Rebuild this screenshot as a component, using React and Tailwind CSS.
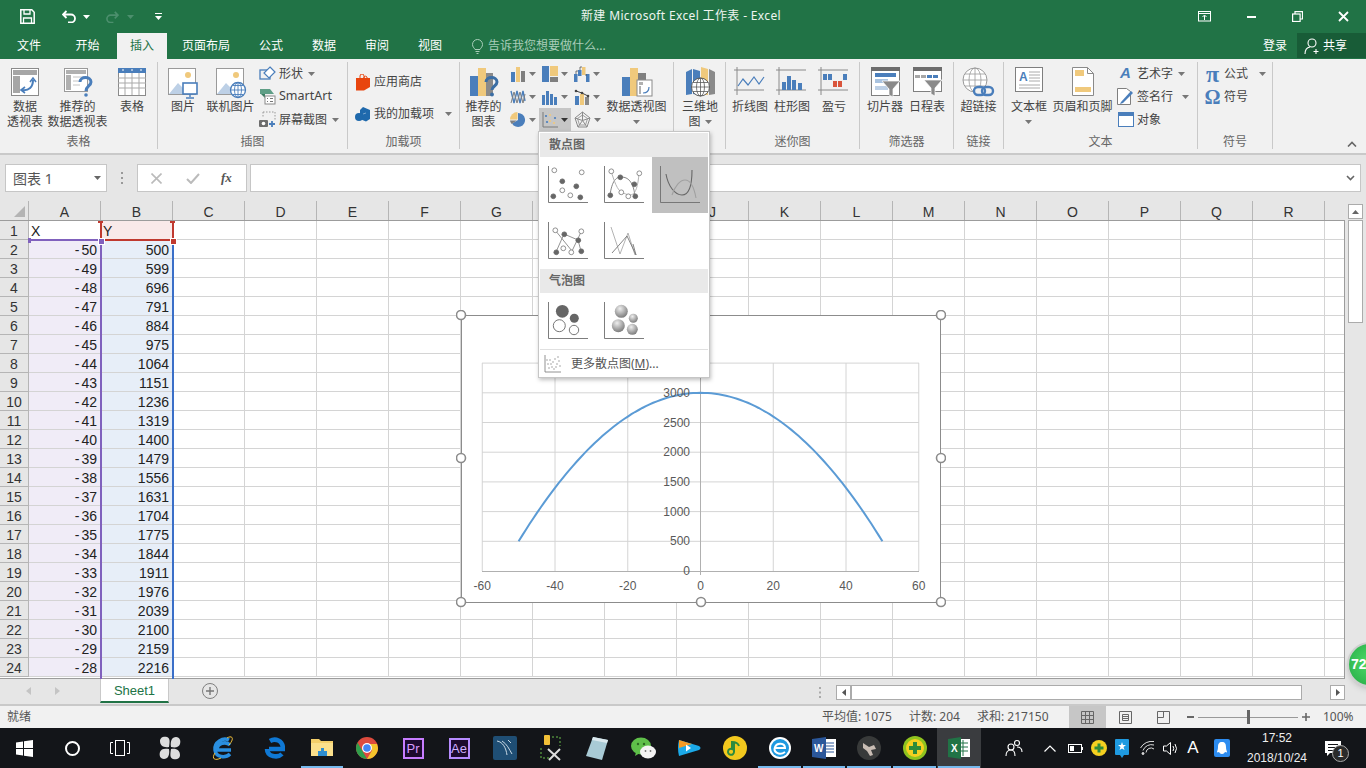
import React from "react";

const B = "#4a7ebb", O = "#f0c97c", G = "#7f7f7f";

const Caret = ({ c = "#777", className = "" }) => (
  <svg width="7" height="4" viewBox="0 0 7 4" className={className}><path d="M0 0h7L3.5 4z" fill={c} /></svg>
);

const Ic = ({ w = 30, h = 30, vb, children, className = "" }) => (
  <svg width={w} height={h} viewBox={vb || `0 0 ${w} ${h}`} className={className} fill="none">{children}</svg>
);

const Pivot = () => (
  <Ic w={30} h={30}>
    <rect x="1.5" y="1.5" width="27" height="27" fill="#fff" stroke="#8a8a8a" />
    <rect x="3" y="3" width="24" height="5" fill="#a6a6a6" /><rect x="3" y="9" width="7" height="17" fill="#a6a6a6" />
    <path d="M12 23c7 1 11-3 11-10" stroke={B} strokeWidth="2" />
    <path d="M20 15l3-4 3 4M15 20l-4 3 4 3" stroke={B} strokeWidth="1.6" />
  </Ic>
);
const RecPivot = () => (
  <Ic w={30} h={30}>
    <rect x="1.5" y="1.5" width="23" height="23" fill="#fff" stroke="#9a9a9a" />
    <rect x="3" y="3" width="20" height="4" fill="#b0b0b0" /><rect x="3" y="8" width="5" height="15" fill="#b0b0b0" />
    <path d="M10 10h12M10 14h8M10 18h7" stroke="#c4c4c4" />
    <path d="M17 15c0-6 11-6 11 0 0 4-5 4-5 9" stroke={B} strokeWidth="3" />
    <circle cx="23" cy="28" r="1.8" fill={B} />
  </Ic>
);
const TableI = () => (
  <Ic w={30} h={30}>
    <rect x="1.5" y="1.5" width="27" height="27" fill="#fff" stroke="#8a8a8a" />
    <rect x="1" y="1" width="28" height="5" fill={B} />
    <path d="M5 3h2M14 3h2M23 3h2" stroke="#fff" />
    <path d="M1 11h28M1 16h28M1 21h28M8 6v22M15 6v22M22 6v22" stroke="#a9a9a9" />
  </Ic>
);
const Landscape = () => (
  <>
    <rect x="1.5" y="1.5" width="27" height="26" fill="#fff" stroke="#9a9a9a" />
    <circle cx="21" cy="8" r="3" fill={O} />
    <path d="M2 27l9-11 7 7 3-2 4 6z" fill="#bdd0e6" />
  </>
);
const PicI = () => (
  <Ic w={32} h={32}>
    <Landscape />
    <rect x="16" y="16" width="14" height="11" fill="#fff" stroke={B} strokeWidth="1.6" />
    <path d="M23 27v3M19 31h8" stroke={B} strokeWidth="1.4" />
  </Ic>
);
const OnlineI = () => (
  <Ic w={32} h={32}>
    <Landscape />
    <circle cx="23" cy="23" r="7.5" fill="#fff" stroke={B} strokeWidth="1.3" />
    <path d="M15.5 23h15M23 15.5v15M18 18.5h10M18 27.5h10" stroke={B} strokeWidth=".9" />
    <ellipse cx="23" cy="23" rx="3.5" ry="7.5" stroke={B} strokeWidth=".9" />
  </Ic>
);
const Shapes = () => (
  <Ic w={17} h={16}>
    <rect x="1" y="4" width="10" height="9" stroke={B} strokeWidth="1.3" />
    <path d="M11 1l5 5-6 6-5-5z" fill="#fff" stroke={B} strokeWidth="1.2" />
  </Ic>
);
const SmartArtI = () => (
  <Ic w={17} h={17}>
    <path d="M1 1h10l4 5H1z" fill="#5f9e86" /><path d="M2 6l4 4v-4z" fill="#3d7c63" />
    <rect x="6" y="8" width="10" height="8" fill="#fff" stroke="#8a8a8a" />
    <path d="M8 10.5h1M11 10.5h3M8 13.5h1M11 13.5h3" stroke="#777" />
  </Ic>
);
const Shot = () => (
  <Ic w={17} h={17}>
    <path d="M4 1h12v9" stroke="#999" strokeDasharray="1.5 1.5" />
    <path d="M4 1v6" stroke="#999" strokeDasharray="1.5 1.5" />
    <rect x="0" y="9" width="9" height="7" rx="1" fill="#6d6d6d" /><circle cx="4.5" cy="12.5" r="1.8" fill="#fff" />
    <path d="M13 10v6M10 13h6" stroke={B} strokeWidth="1.8" />
  </Ic>
);
const Store = () => (
  <Ic w={16} h={17}>
    <path d="M1 4h14v9l-6 3.5H1z" fill="#e8450e" />
    <path d="M5 4V2a2 2 0 014 0v3M9 4V3a2 2 0 013 0v2" stroke="#e8450e" strokeWidth="1" />
  </Ic>
);
const AddIn = () => (
  <Ic w={16} h={15}>
    <path d="M8 0l7 3v9l-4 2.5L5 12V3z" fill="#1f69ac" /><circle cx="4" cy="10" r="4" fill="#1f69ac" />
    <path d="M8 7l3-1" stroke="#fff" strokeWidth=".4" />
  </Ic>
);
const Bars = ({ data, w = 16, h = 16 }) => (
  <Ic w={w} h={h}>
    {data.map(([x, y, bw, c], i) => <rect key={i} x={x} y={y} width={bw} height={h - y} fill={c} />)}
  </Ic>
);
const RecChart = () => (
  <Ic w={30} h={30}>
    <rect x="1" y="9" width="8" height="20" fill={B} /><rect x="9" y="1" width="8" height="28" fill={O} />
    <rect x="17" y="6" width="7" height="23" fill="#8a8a8a" />
    <path d="M17 15c0-6 11-6 11 0 0 4-5 4-5 8" stroke="#3b6ea5" strokeWidth="3" />
    <circle cx="23" cy="27.500" r="1.9" fill="#3b6ea5" />
  </Ic>
);
const Hier = () => (
  <Ic w={16} h={16}>
    <rect x="0" y="0" width="7" height="16" fill={B} /><rect x="8" y="0" width="8" height="10" fill={O} /><rect x="8" y="11" width="8" height="5" fill="#7f7f7f" />
  </Ic>
);
const Water = () => (
  <Ic w={16} h={16}>
    <rect x="0" y="8" width="3.5" height="8" fill={B} /><rect x="4" y="4" width="3.5" height="6" fill={B} /><rect x="8" y="1" width="3.5" height="8" fill={O} /><rect x="12" y="8" width="3.5" height="8" fill={B} />
    <path d="M2 8V5h2M6 4V1h2M11 9h2" stroke="#444" strokeWidth=".7" />
  </Ic>
);
const LineI = () => (
  <Ic w={16} h={16}>
    <path d="M1 2l3 12 3-12 3 12 3-12 2 10" stroke={B} strokeWidth="1.4" />
    <path d="M1 14L4 3l3 11 3-11 3 11 2-9" stroke="#7f7f7f" strokeWidth="1" />
  </Ic>
);
const Combo = () => (
  <Ic w={16} h={17}>
    <rect x="1" y="8" width="4" height="9" fill={B} /><rect x="6" y="6" width="4" height="11" fill={O} /><rect x="11" y="9" width="4" height="8" fill="#8a8a8a" />
    <path d="M2 3l6 2 6 3" stroke="#444" strokeWidth="1" /><circle cx="2" cy="3" r="1.3" fill="#444" /><circle cx="8" cy="5" r="1.3" fill="#444" /><circle cx="14" cy="8" r="1.3" fill="#444" />
  </Ic>
);
const Pie = () => (
  <Ic w={16} h={16}>
    <path d="M8 1a7 7 0 11-6 10.5L8 8z" fill={B} /><path d="M7.5 0v7.5L0 7.5A7.5 7.5 0 017.5 0z" fill={O} /><path d="M0 8.5h6.8L1.6 12A7 7 0 010 8.5z" fill="#7f7f7f" />
  </Ic>
);
const ScatterS = () => (
  <Ic w={16} h={16}>
    <path d="M1 0v15h15" stroke="#7a7a7a" /><circle cx="4" cy="4" r="1.1" fill={B} /><circle cx="8" cy="9" r="1.1" fill={O} /><circle cx="8" cy="3" r="1.1" fill={O} /><circle cx="13" cy="6" r="1.1" fill={B} /><circle cx="5" cy="10" r="1.1" fill={B} /><circle cx="12" cy="11" r="1.1" fill={O} />
  </Ic>
);
const Radar = () => (
  <Ic w={17} h={17}>
    <path d="M8.5 1l7.5 6-3 9H4L1 7z" stroke="#8a8a8a" /><path d="M8.5 4l5 3.5-2 6.5H5.5l-2-6.5z" stroke="#a0a0a0" /><path d="M8.5 1v8.5M16 7L8.5 9.5M13 16L8.5 9.5M4 16l4.5-6.5M1 7l7.5 2.5" stroke="#8a8a8a" />
  </Ic>
);
const PivChart = () => (
  <Ic w={32} h={30}>
    <rect x="1" y="10" width="8" height="19" fill={B} /><rect x="9" y="1" width="8" height="28" fill={O} /><rect x="17" y="6" width="8" height="23" fill="#7f7f7f" />
    <rect x="16" y="13" width="15" height="16" fill="#fff" stroke="#8a8a8a" />
    <rect x="18" y="15" width="4" height="3" fill="#b0b0b0" /><rect x="18" y="19" width="2" height="8" fill="#b0b0b0" />
    <path d="M22 26c4 0 6-2 6-6" stroke={B} strokeWidth="1.2" />
  </Ic>
);
const Map3D = () => (
  <Ic w={31} h={30}>
    <path d="M1 5l6-3v25l-6 1z" fill={B} /><path d="M8 2l7 2v24l-7-1z" fill="#4a7ebb" /><path d="M16 0l7 2v26h-7z" fill={O} /><path d="M24 2l6 3v22l-6 1z" fill="#8a8a8a" />
    <circle cx="15.5" cy="20" r="9" fill="#fff" stroke="#5b5b5b" />
    <path d="M6.5 20h18M15.5 11v18M8 15.5h15M8 24.5h15" stroke="#5b5b5b" strokeWidth=".8" /><ellipse cx="15.5" cy="20" rx="4" ry="9" stroke="#5b5b5b" strokeWidth=".8" />
  </Ic>
);
const Spark = ({ children }) => (
  <Ic w={32} h={28}>
    <path d="M0 3h30M0 23h30M3 0v28" stroke="#8a8a8a" />{children}
  </Ic>
);
const Slicer = () => (
  <Ic w={29} h={30}>
    <rect x=".5" y=".5" width="28" height="28" fill="#fff" stroke="#7f7f7f" /><rect y="0" width="29" height="4" fill="#6d6d6d" />
    <rect x="4" y="6" width="21" height="4" fill={B} /><rect x="4" y="12" width="13" height="4" fill="#a9c3e0" /><rect x="4" y="19" width="13" height="4" fill="#bdd0e6" />
    <path d="M11 14h18l-7 8v8l-4-2v-6z" fill="#8a8a8a" stroke="#fff" strokeWidth=".7" />
  </Ic>
);
const Timeline = () => (
  <Ic w={29} h={30}>
    <rect x=".5" y=".5" width="28" height="24" fill="#fff" stroke="#7f7f7f" /><rect y="0" width="29" height="4" fill="#6d6d6d" />
    <rect x="2" y="8" width="5" height="3" fill="#a6a6a6" /><rect x="8" y="8" width="5" height="3" fill="#a6a6a6" /><rect x="14" y="8" width="5" height="3" fill={B} /><rect x="20" y="8" width="5" height="3" fill={B} />
    <path d="M11 13h18l-7 8v8l-4-2v-6z" fill="#8a8a8a" stroke="#fff" strokeWidth=".7" />
  </Ic>
);
const Globe = () => (
  <Ic w={33} h={31}>
    <circle cx="13" cy="13" r="12" fill="#fff" stroke="#9a9a9a" />
    <path d="M1 13h24M13 1v24M3 7h20M3 19h20" stroke="#9a9a9a" strokeWidth=".8" /><ellipse cx="13" cy="13" rx="6" ry="12" stroke="#9a9a9a" strokeWidth=".8" />
    <rect x="12" y="20" width="11" height="8" rx="4" stroke={B} strokeWidth="2.4" fill="#f1f1f1" /><rect x="20" y="20" width="11" height="8" rx="4" stroke={B} strokeWidth="2.4" />
  </Ic>
);
const TextBox = () => (
  <Ic w={29} h={26}>
    <rect x=".5" y=".5" width="27" height="24" fill="#fff" stroke="#7f7f7f" />
    <text x="4" y="14" fontSize="12" fontWeight="700" fill={B} fontFamily="Liberation Sans">A</text>
    <path d="M14 5h11M14 8h11M14 11h11M14 14h11M4 18h21M4 21h21" stroke="#aaa" />
  </Ic>
);
const HeaderI = () => (
  <Ic w={22} h={29}>
    <path d="M.5.5h15l6 6v22H.5z" fill="#fff" stroke="#8a8a8a" /><path d="M15.5.5v6h6" stroke="#8a8a8a" />
    <rect x="3" y="3" width="9" height="6" fill={O} /><rect x="3" y="20" width="16" height="5" fill={O} />
  </Ic>
);
const Sign = () => (
  <Ic w={17} h={17}>
    <path d="M.5.5h9l4 3v13H.5z" fill="#fff" stroke="#7f7f7f" /><path d="M4 14L14 3l2 2L6 15l-3 1z" fill={B} />
  </Ic>
);
const ObjI = () => (
  <Ic w={16} h={15}>
    <rect x=".5" y=".5" width="15" height="14" fill="#fff" stroke={B} /><rect width="16" height="4" fill={B} />
  </Ic>
);

const Big = ({ w, icon, lines, caret, top = "h-[29px]" }) => (
  <div className={`flex flex-col items-center pt-[5px] shrink-0 ${w}`}>
    <div className={`flex items-start justify-center ${top}`}>{icon}</div>
    <div className="mt-[3px] text-center leading-[15px] whitespace-nowrap">
      {lines.map((l, i) => <div key={i} className="h-[15px] flex justify-center items-center gap-[4px]">{l}{caret === i && <Caret />}</div>)}
      {caret === lines.length && <div className="h-[15px] flex justify-center items-center"><Caret /></div>}
    </div>
  </div>
);
const Small = ({ icon, label, caret, w, gap = "gap-[3px]" }) => (
  <div className={`h-[23px] flex items-center whitespace-nowrap ${gap} ${w || ""}`}>
    <div className="w-[17px] flex justify-center shrink-0">{icon}</div>
    <span>{label}</span>
    {caret && <Caret className={caret} />}
  </div>
);
const Group = ({ w, label, children }) => (
  <div className={`h-[87px] shrink-0 flex flex-col border-r border-[#c9c9c9] ${w}`}>
    <div className="h-[72px] flex">{children}</div>
    <div className="h-[15px] leading-[15px] text-center text-[#666]">{label}</div>
  </div>
);
const Cell3 = ({ icon, active }) => (
  <div className={`w-[32px] h-[23px] flex items-center justify-center gap-[3px] ${active ? "bg-[#c6c6c6]" : ""}`}>
    {icon}<Caret c={active ? "#333" : "#777"} />
  </div>
);

function Ribbon() {
  return (
    <div className="h-[94px] bg-[#f1f1f1] pt-[3px] flex text-[12px] text-[#444]">
      <Group w="w-[158px]" label="表格">
        <Big w="w-[40px] ml-[5px]" icon={<Pivot />} lines={["数据", "透视表"]} />
        <Big w="w-[65px]" icon={<RecPivot />} lines={["推荐的", "数据透视表"]} />
        <Big w="w-[44px]" icon={<TableI />} lines={["表格"]} />
      </Group>
      <Group w="w-[190px]" label="插图">
        <Big w="w-[48px] ml-[1px]" icon={<PicI />} lines={["图片"]} />
        <Big w="w-[47px]" icon={<OnlineI />} lines={["联机图片"]} />
        <div className="ml-[5px]">
          <Small icon={<Shapes />} label="形状" caret="ml-[2px]" />
          <Small icon={<SmartArtI />} label={<span className="text-[12.5px]">SmartArt</span>} />
          <Small icon={<Shot />} label="屏幕截图" caret="ml-[2px]" />
        </div>
      </Group>
      <Group w="w-[112px]" label="加载项">
        <div className="pl-[7px] pt-[4px]">
          <div className="h-[32px] flex items-center gap-[2px]"><div className="w-[17px]"><Store /></div><span>应用商店</span></div>
          <div className="h-[32px] flex items-center gap-[2px]"><div className="w-[17px]"><AddIn /></div><span>我的加载项</span><Caret className="ml-[9px]" /></div>
        </div>
      </Group>
      <Group w="w-[214px]" label="">
        <Big w="w-[47px]" icon={<RecChart />} lines={["推荐的", "图表"]} />
        <div className="grid grid-cols-3 grid-rows-3 h-[69px]">
          <Cell3 icon={<Bars data={[[1,6,4,B],[6,1,4,O],[11,5,4,"#7f7f7f"]]} />} />
          <Cell3 icon={<Hier />} />
          <Cell3 icon={<Water />} />
          <Cell3 icon={<LineI />} />
          <Cell3 icon={<Bars data={[[0,6,3,B],[4,2,3,B],[8,5,3,B],[12,8,3,B]]} />} />
          <Cell3 icon={<Combo />} />
          <Cell3 icon={<Pie />} />
          <Cell3 icon={<ScatterS />} active />
          <Cell3 icon={<Radar />} />
        </div>
        <Big w="w-[65px] ml-[1px]" icon={<PivChart />} lines={["数据透视图"]} caret={1} />
      </Group>
      <Group w="w-[52px]" label="">
        <Big w="w-[52px]" icon={<Map3D />} lines={["三维地", "图"]} caret={1} />
      </Group>
      <Group w="w-[134px]" label="迷你图">
        <Big w="w-[42px] ml-[3px]" icon={<Spark><path d="M4 19l5-7 5 6 6-8 5 7 5-7" stroke={B} strokeWidth="1.2" /></Spark>} lines={["折线图"]} />
        <Big w="w-[42px]" icon={<Spark><rect x="6" y="15" width="4" height="8" fill={B} /><rect x="11" y="9" width="4" height="14" fill={B} /><rect x="16" y="13" width="4" height="10" fill={B} /><rect x="22" y="16" width="4" height="7" fill={B} /></Spark>} lines={["柱形图"]} />
        <Big w="w-[42px]" icon={<Spark><rect x="5" y="7" width="4" height="6" fill={B} /><rect x="10" y="7" width="4" height="6" fill={B} /><rect x="15" y="14" width="4" height="6" fill="#d9543b" /><rect x="20" y="14" width="4" height="6" fill="#d9543b" /><rect x="25" y="7" width="4" height="6" fill={B} /></Spark>} lines={["盈亏"]} />
      </Group>
      <Group w="w-[94px]" label="筛选器">
        <Big w="w-[42px] ml-[4px]" icon={<Slicer />} lines={["切片器"]} />
        <Big w="w-[42px]" icon={<Timeline />} lines={["日程表"]} />
      </Group>
      <Group w="w-[50px]" label="链接">
        <Big w="w-[49px]" icon={<Globe />} lines={["超链接"]} />
      </Group>
      <Group w="w-[194px]" label="文本">
        <Big w="w-[50px]" icon={<TextBox />} lines={["文本框"]} caret={1} />
        <Big w="w-[57px]" icon={<HeaderI />} lines={["页眉和页脚"]} />
        <div className="ml-[6px]">
          <Small icon={<span className="font-['Liberation_Sans'] italic font-bold text-[15px] text-[#4a7ebb]">A</span>} label="艺术字" caret="ml-[2px]" />
          <Small icon={<Sign />} label="签名行" caret="ml-[6px]" />
          <Small icon={<ObjI />} label="对象" />
        </div>
      </Group>
      <Group w="w-[75px]" label="符号">
        <div className="pl-[6px]">
          <Small gap="gap-[3px]" icon={<span className="font-['Liberation_Serif'] font-bold text-[24px] leading-[16px] text-[#4a7ebb]">π</span>} label="公式" caret="ml-[8px]" />
          <Small gap="gap-[3px]" icon={<span className="font-['Liberation_Serif'] font-bold text-[20px] leading-[16px] text-[#4a7ebb]">Ω</span>} label="符号" />
        </div>
      </Group>
      <div className="flex-1 flex justify-end items-start pt-[79px] pr-[9px]">
        <svg width="10" height="6" viewBox="0 0 10 6"><path d="M1 5.5l4-4 4 4" stroke="#666" strokeWidth="1.6" fill="none" /></svg>
      </div>
    </div>
  );
}

const colNames = "ABCDEFGHIJKLMNOPQR".split("");
const rows = Array.from({ length: 24 }, (_, i) => i + 1);

function Sheet() {
  return (
    <div className="relative h-[478px] bg-[#e6e6e6] flex">
      <div className="w-[1345px] shrink-0">
        <div className="h-[20px] flex border-b border-[#9c9c9c] text-[14px] leading-[22px] text-[#333] font-['Liberation_Sans']">
          <div className="w-[29px] border-r border-[#b5b5b5] flex items-end justify-end pr-[3px] pb-[3px]">
            <svg width="11" height="11" viewBox="0 0 11 11"><path d="M11 0v11H0z" fill="#b4b4b4" /></svg>
          </div>
          {colNames.map(c => <div key={c} className="w-[72px] text-center border-r border-[#b5b5b5]">{c}</div>)}
          <div className="w-[20px]" />
        </div>
        <div className="bg-white border-r border-b border-[#9c9c9c] h-[458px] overflow-hidden">
          {rows.map(r => (
            <div key={r} className="h-[19px] flex text-[14px] leading-[21px] text-[#222] font-['Liberation_Sans']">
              <div className="w-[29px] bg-[#e6e6e6] text-center text-[#333] border-r border-b border-[#b5b5b5]">{r}</div>
              {colNames.map((c, idx) => {
                let bg = "";
                if (idx === 0 && r > 1) bg = "bg-[#f0ecf7]";
                if (idx === 1) bg = r === 1 ? "bg-[#f9e9e9]" : "bg-[#e7eef8]";
                const x = r - 52;
                let t = null;
                if (r === 1 && idx === 0) t = <span className="pl-[2px]">X</span>;
                if (r === 1 && idx === 1) t = <span className="pl-[2px]">Y</span>;
                if (r > 1 && idx === 0) t = <span className="block text-right pr-[3px]"><span className="mr-[2px]">-</span>{-x}</span>;
                if (r > 1 && idx === 1) t = <span className="block text-right pr-[3px]">{3000 - x * x}</span>;
                return <div key={c} className={`w-[72px] h-[19px] border-r border-b border-[#d4d4d4] ${bg}`}>{t}</div>;
              })}
              <div className="w-[19px] border-b border-[#d4d4d4]" />
            </div>
          ))}
        </div>
      </div>
      <div className="flex-1 pl-[3px] pt-[3px]">
        <div className="w-[15px] h-[15px] bg-white border border-[#ababab] flex items-center justify-center">
          <svg width="7" height="4" viewBox="0 0 7 4"><path d="M0 4h7L3.5 0z" fill="#666" /></svg>
        </div>
        <div className="w-[15px] h-[103px] mt-px bg-white border border-[#ababab]" />
      </div>

      {/* selection range markers */}
      <div className="absolute left-[29px] top-[38px] w-[72px] h-[2px] bg-[#8061bd]" />
      <div className="absolute left-[100px] top-[40px] w-[2px] h-[438px] bg-[#8061bd]" />
      <div className="absolute left-[101px] top-[38px] w-[72px] h-[2px] bg-[#c0392f]" />
      <div className="absolute left-[100px] top-[20px] w-[2px] h-[19px] bg-[#c0392f]" />
      <div className="absolute left-[172px] top-[20px] w-[2px] h-[19px] bg-[#c0392f]" />
      <div className="absolute left-[172px] top-[40px] w-[2px] h-[438px] bg-[#3a6fc8]" />
      <div className="absolute left-[28px] top-[37px] w-[3px] h-[5px] bg-[#8061bd]" />
      <div className="absolute left-[98px] top-[37px] w-[5px] h-[5px] bg-[#8061bd] border border-white box-content" />
      <div className="absolute left-[170px] top-[37px] w-[5px] h-[5px] bg-[#c0392f] border border-white box-content" />
      <div className="absolute left-[98px] top-[20px] w-[5px] h-[2px] bg-[#c0392f]" />
      <div className="absolute left-[170px] top-[20px] w-[5px] h-[2px] bg-[#c0392f]" />

      {/* status badge */}
      <div className="absolute left-[1347px] top-[441px] w-[45px] h-[45px] rounded-full border-2 border-[#cfcfcf] bg-[radial-gradient(circle_at_50%_45%,#4fdc6a,#24a844)] shadow-md flex items-center pl-[2px] text-[14px] font-bold text-white font-['Liberation_Sans'] z-20">72</div>
    </div>
  );
}

function Chart() {
  const X = v => 700.5 + v * (436.5 / 120);
  const Y = v => 571 - v * (178.2 / 3000);
  const pts = [];
  for (let x = -50; x <= 50; x++) pts.push(`${X(x).toFixed(1)},${Y(3000 - x * x).toFixed(1)}`);
  const ox = 456, oy = 310;
  const handles = [[461, 315], [941, 315], [461, 458], [941, 458], [461, 602], [701, 602], [941, 602]];
  return (
    <svg width="490" height="298" viewBox={`${ox} ${oy} 490 298`} className="absolute left-[456px] top-[310px]">
      <rect x="461.5" y="315.5" width="479" height="287" fill="#fff" stroke="#8c8c8c" strokeWidth="1" />
      {[-60, -40, -20, 20, 40, 60].map(v => <path key={v} d={`M${X(v)} 363V571`} stroke="#d4d4d4" />)}
      {[500, 1000, 1500, 2000, 2500, 3000, 3500].map(v => <path key={v} d={`M482 ${Y(v)}H919`} stroke="#d4d4d4" />)}
      <path d={`M482 571.5H919M${X(0)} 363V575`} stroke="#b0b0b0" />
      <polyline points={pts.join(" ")} fill="none" stroke="#5b9bd5" strokeWidth="2" />
      <g fontSize="12" fill="#595959" fontFamily="Liberation Sans">
        {[0, 500, 1000, 1500, 2000, 2500, 3000].map(v => <text key={v} x="690" y={Y(v) + 4} textAnchor="end">{v}</text>)}
        {[-60, -40, -20, 0, 20, 40, 60].map(v => <text key={v} x={X(v)} y="590" textAnchor="middle">{v}</text>)}
      </g>
      {handles.map(([x, y], i) => <circle key={i} cx={x} cy={y} r="4.5" fill="#fff" stroke="#8c8c8c" strokeWidth="1.6" />)}
    </svg>
  );
}

const Axis = () => <path d="M8.5 9v36.5H48" stroke="#6e6e6e" strokeWidth=".9" fill="none" />;
const dot = (x, y, k, hollow) => <circle key={k} cx={x} cy={y} r="2.4" fill={hollow ? "#fff" : "#666"} stroke={hollow ? "#777" : "#666"} strokeWidth=".8" />;
const MenuIcon = ({ children, active }) => (
  <div className={`w-[56px] h-[56px] ${active ? "bg-[#c0c0c0]" : ""}`}>
    <svg width="56" height="56" viewBox="0 0 56 56" fill="none"><Axis />{children}</svg>
  </div>
);
const MenuHead = ({ children }) => (
  <div className="h-[24px] bg-[#e9e9e9] pl-[9px] leading-[24px] font-bold text-[#666]">{children}</div>
);

function Menu() {
  return (
    <div className="absolute left-[538px] top-[131px] w-[172px] h-[247px] bg-white border border-[#c6c6c6] shadow-[1px_2px_4px_rgba(0,0,0,0.25)] p-px text-[12px] z-10">
      <MenuHead>散点图</MenuHead>
      <div className="flex">
        <MenuIcon>
          {[[14.3,13.3],[41.7,15.3],[22.3,33.3],[30.3,38.3]].map(([x,y],i)=>dot(x,y,i,true))}
          {[[22.3,24.3],[36.3,29.3],[13.3,39.3],[40.3,40.3]].map(([x,y],i)=>dot(x,y,"f"+i))}
        </MenuIcon>
        <MenuIcon>
          <path d="M14 38C16 24 20 20 25 20s12 2 14 19" stroke="#777" strokeWidth=".9" />
          <path d="M15 14c3 9 6 20 12 22s14 8 16-20" stroke="#aaa" strokeWidth=".9" />
          {[[15.3,14.3],[43.3,16.3],[25.3,35.3],[32.3,39.3]].map(([x,y],i)=>dot(x,y,i,true))}
          {[[24.3,20.3],[38.3,27.3],[14.3,38.3],[39.3,39.3]].map(([x,y],i)=>dot(x,y,"f"+i))}
        </MenuIcon>
        <MenuIcon active>
          <path d="M14 17c2 12 9 21 16 21s10-8 10-25" stroke="#666" strokeWidth="1.1" />
          <path d="M20 38c3-9 8-15 13-15s9 7 11 18" stroke="#a0a0a0" strokeWidth="1.1" />
        </MenuIcon>
      </div>
      <div className="flex">
        <MenuIcon>
          <path d="M15 17l17 21 10-21M16 39l8-18 14 6 3 11" stroke="#888" strokeWidth=".9" />
          {[[15.3,17.3],[41.3,18.3],[23.3,35.3],[31.3,39.3]].map(([x,y],i)=>dot(x,y,i,true))}
          {[[24.3,21.3],[38.3,27.3],[16.3,39.3],[41.3,38.3]].map(([x,y],i)=>dot(x,y,"f"+i))}
        </MenuIcon>
        <MenuIcon>
          <path d="M15 14l9 27 8-21 7 22" stroke="#aaa" strokeWidth=".9" />
          <path d="M16 40l15-17 9 19-3-11" stroke="#777" strokeWidth=".9" />
        </MenuIcon>
      </div>
      <MenuHead>气泡图</MenuHead>
      <div className="flex">
        <MenuIcon>
          <circle cx="22.3" cy="18.3" r="6.4" fill="#666" /><circle cx="34.3" cy="25.3" r="4.5" fill="#666" />
          <circle cx="19.3" cy="32.7" r="6" fill="#fff" stroke="#777" /><circle cx="34" cy="37" r="4.7" fill="#fff" stroke="#777" />
        </MenuIcon>
        <MenuIcon>
          <defs><radialGradient id="ball" cx=".4" cy=".3" r=".8"><stop offset="0" stopColor="#eee" /><stop offset=".6" stopColor="#a0a0a0" /><stop offset="1" stopColor="#6e6e6e" /></radialGradient></defs>
          <circle cx="25.3" cy="18.3" r="6.5" fill="url(#ball)" /><circle cx="37.3" cy="25.3" r="4.5" fill="url(#ball)" />
          <circle cx="22.3" cy="32.7" r="6.5" fill="url(#ball)" /><circle cx="36.3" cy="36.3" r="5.5" fill="url(#ball)" />
        </MenuIcon>
      </div>
      <div className="border-t border-[#e0e0e0] h-[27px] flex items-center pl-[4px] pt-[1px] text-[#555]">
        <svg width="18" height="18" viewBox="0 0 18 18" fill="none">
          <path d="M1 0v17h16" stroke="#777" strokeWidth=".8" />
          {[[4,9],[6,5],[8,12],[9,7],[11,4],[13,9],[14,2],[5,13],[10,14],[15,6],[12,12],[7,9],[3,5],[16,11]].map(([x,y],i)=><circle key={i} cx={x} cy={y} r=".7" fill="#888" />)}
        </svg>
        <span className="ml-[9px]">更多散点图(<u>M</u>)...</span>
      </div>
    </div>
  );
}

const TB = ({ w, children, line, active }) => (
  <div className={`relative h-[40px] flex items-center justify-center shrink-0 ${w} ${active ? "bg-[#3a3c3f]" : ""}`}>
    {children}
    {line && <div className="absolute left-0 right-0 bottom-0 h-[2px] mx-[1px] bg-[#76b9ed]" />}
  </div>
);
const Sq = ({ border, color, t }) => (
  <div className={`w-[21px] h-[21px] border-2 ${border} ${color} bg-[#1c0a2e] flex items-center justify-center text-[13px] leading-none font-['Liberation_Sans']`}>{t}</div>
);

function Taskbar() {
  return (
    <div className="h-[40px] bg-[#131519] flex text-white">
      <TB w="w-[48px]"><svg width="17" height="17" viewBox="0 0 17 17" fill="#fff"><path d="M0 2.5l7-1v6.5H0zM8 1.3L17 0v8H8zM0 9h7v6.500l-7-1zM8 9h9v8l-9-1.300z" /></svg></TB>
      <TB w="w-[48px]"><div className="w-[15px] h-[15px] rounded-full border-[2.5px] border-white" /></TB>
      <TB w="w-[48px]"><svg width="20" height="16" viewBox="0 0 20 16" fill="none" stroke="#fff"><rect x="5.500" y=".5" width="9" height="15" /><path d="M3 2.500H.5v11H3M17 2.500h2.500v11H17" /></svg></TB>
      <TB w="w-[52px]"><svg width="22" height="24" viewBox="0 0 22 24" fill="#ddd"><path d="M10 11C4 12 1 9 1 5s4-5 7-4 3 4 2 10zM12 11c-1-6 1-10 5-10s5 4 4 7-4 4-9 3zM12 13c6-1 9 2 9 6s-4 5-7 4-3-4-2-10zM10 13c1 6-1 10-5 10s-5-4-4-7 4-4 9-3z" /></svg></TB>
      <TB w="w-[52px]"><svg width="24" height="26" viewBox="0 0 24 26" fill="none"><path d="M21 15H7c0-7 9-9 13-5M20 19c-4 4-14 4-15-4s8-13 14-10" stroke="#2a8fe0" strokeWidth="3.500" /><path d="M17 3c5-3 8 0 2 7M5 18c-4 6 0 8 6 5" stroke="#f5c33b" strokeWidth="1" /></svg></TB>
      <TB w="w-[52px]"><svg width="22" height="22" viewBox="0 0 22 22" fill="none"><path d="M6 12h14C20 3 12 1 7 4M19 17c-4 4-15 3-15-5" stroke="#0f78d4" strokeWidth="4.500" /></svg></TB>
      <TB w="w-[44px]" line><svg width="22" height="20" viewBox="0 0 22 20"><path d="M0 1h8l2 2h12v15H0z" fill="#f4cf6a" /><rect y="5" width="22" height="13" fill="#fbe08c" /><path d="M7 18v-5h3V10h3v3h3v5z" fill="#2e8ed0" /></svg></TB>
      <TB w="w-[46px]"><svg width="22" height="22" viewBox="0 0 22 22"><circle cx="11" cy="11" r="11" fill="#dd4b3e" /><path d="M11 22a11 11 0 01-9.500-16.500L7 15z" fill="#2f9e4b" /><path d="M22 11a11 11 0 01-11 11l5-8.500L14 7h7z" fill="#f5c42c" /><circle cx="11" cy="11" r="5" fill="#fff" /><circle cx="11" cy="11" r="3.800" fill="#4285f4" /></svg></TB>
      <TB w="w-[46px]"><Sq border="border-[#c77dff]" color="text-[#d79bff]" t="Pr" /></TB>
      <TB w="w-[46px]"><Sq border="border-[#b78cff]" color="text-[#cfb0ff]" t="Ae" /></TB>
      <TB w="w-[46px]"><svg width="24" height="24" viewBox="0 0 24 24" fill="none"><rect width="24" height="24" rx="2" fill="#1f4e74" /><path d="M4 5c6 1 9 7 10 14M9 5c5 3 7 8 10 13M15 4l3 3" stroke="#c9d9e5" strokeWidth="1" /></svg></TB>
      <TB w="w-[46px]"><svg width="26" height="28" viewBox="0 0 26 28" fill="none"><rect x="6" y="1" width="6" height="10" rx="1" fill="#f2c037" /><path d="M14 3h8v9M3 14v10h10" stroke="#6abf4b" strokeDasharray="2 2" /><path d="M10 15l12 11M22 15L11 26" stroke="#ddd" strokeWidth="2" /></svg></TB>
      <TB w="w-[46px]"><svg width="22" height="24" viewBox="0 0 22 24"><path d="M7 1l15 3-6 20-16-4z" fill="#a9cbd6" /><path d="M7 1l15 3-1 3L6 4z" fill="#dbe9ee" /></svg></TB>
      <TB w="w-[46px]"><svg width="25" height="22" viewBox="0 0 25 22"><ellipse cx="10" cy="9" rx="10" ry="8.500" fill="#5fc04a" /><path d="M5 15l-1 4 5-3z" fill="#5fc04a" /><ellipse cx="17" cy="15" rx="8" ry="6.500" fill="#f3f3f3" /><circle cx="7" cy="7" r="1.200" fill="#2d6a22" /><circle cx="13" cy="7" r="1.200" fill="#2d6a22" /><circle cx="14.500" cy="14" r=".9" fill="#777" /><circle cx="19.500" cy="14" r=".9" fill="#777" /></svg></TB>
      <TB w="w-[46px]"><svg width="24" height="20" viewBox="0 0 24 20"><path d="M2 2q-2 8 0 16l20-6q3-2 0-4z" fill="#1ba9e8" /><path d="M2 2L15 6 2 10z" fill="#f59a23" /><path d="M9 6.500v7l5-3.500z" fill="#fff" /></svg></TB>
      <TB w="w-[45px]"><svg width="24" height="24" viewBox="0 0 24 24"><circle cx="12" cy="12" r="12" fill="#f2c81e" /><path d="M11 6v10a3 3 0 11-2-3V6c3 0 6 1 7 4" stroke="#2c8a3f" strokeWidth="2" fill="none" /></svg></TB>
      <TB w="w-[45px]" line><svg width="24" height="24" viewBox="0 0 24 24" fill="none"><circle cx="12" cy="12" r="11" fill="#fff" /><circle cx="12" cy="12" r="9" fill="#1f9ae0" /><path d="M6 12h11c0-5-8-6-10-1s4 9 10 5" stroke="#fff" strokeWidth="2" /></svg></TB>
      <TB w="w-[44px]" line><svg width="24" height="22" viewBox="0 0 24 22"><rect x="10" y="2" width="14" height="18" fill="#fff" /><path d="M12 6h10M12 9h10M12 12h10M12 15h10" stroke="#2b579a" /><path d="M0 2l14-2v22L0 20z" fill="#2b579a" /><text x="2" y="15" fontSize="10" fontWeight="700" fill="#fff" fontFamily="Liberation Sans">W</text></svg></TB>
      <TB w="w-[46px]" line><svg width="24" height="24" viewBox="0 0 24 24"><circle cx="12" cy="12" r="12" fill="#383a3a" /><path d="M6 7l6 4 5-2 2 4-5 1 2 5-3 1-3-5-4-3z" fill="#c9bdb4" /></svg></TB>
      <TB w="w-[45px]" line><svg width="24" height="24" viewBox="0 0 24 24"><circle cx="12" cy="12" r="12" fill="#8fc31f" /><circle cx="12" cy="12" r="9" fill="#f5d020" /><path d="M10 6h4v4h4v4h-4v4h-4v-4H6v-4h4z" fill="#2e8b3a" /></svg></TB>
      <TB w="w-[44px]" line active><svg width="22" height="22" viewBox="0 0 22 22"><rect x="9" y="2" width="13" height="18" fill="#fff" /><path d="M11 6h9M11 10h9M11 14h9M15 3v16" stroke="#217346" /><path d="M0 2l13-2v22L0 20z" fill="#217346" /><text x="3" y="15" fontSize="10" fontWeight="700" fill="#fff" fontFamily="Liberation Sans">X</text></svg></TB>

      <TB w="w-[24px] ml-[21px]"><svg width="18" height="18" viewBox="0 0 18 18" fill="none" stroke="#fff" strokeWidth="1.100"><circle cx="6" cy="8" r="3" /><path d="M1 17c0-4 2-6 5-6s4 2 4 6" /><circle cx="12" cy="4" r="2.500" /><path d="M12 8c3 0 5 2 5 5" /></svg></TB>
      <TB w="w-[24px] ml-[12px]"><svg width="12" height="7" viewBox="0 0 12 7" fill="none" stroke="#fff" strokeWidth="1.200"><path d="M.5 6.500L6 1l5.500 5.500" /></svg></TB>
      <TB w="w-[24px] ml-[1px]"><svg width="15" height="9" viewBox="0 0 15 9" fill="none"><rect x=".5" y=".5" width="13" height="8" stroke="#fff" /><rect x="2" y="2" width="4" height="5" fill="#fff" /><rect x="14" y="3" width="1" height="3" fill="#fff" /></svg></TB>
      <TB w="w-[23px]"><svg width="16" height="16" viewBox="0 0 16 16"><circle cx="8" cy="8" r="8" fill="#f5d020" /><path d="M6.500 3.500h3v3h3v3h-3v3h-3v-3h-3v-3h3z" fill="#2e8b3a" /></svg></TB>
      <TB w="w-[24px]"><svg width="14" height="19" viewBox="0 0 14 19"><rect width="14" height="16" rx="1" fill="#1f9ae0" /><path d="M7 3l1 3h3l-2.500 2 1 3L7 9.500 4.500 11l1-3L3 6h3z" fill="#fff" /><path d="M5 16h4l-2 3z" fill="#1f9ae0" /></svg></TB>
      <TB w="w-[24px] ml-[1px]"><svg width="15" height="14" viewBox="0 0 15 14" fill="none" stroke="#ddd"><path d="M.5 7A13 13 0 0114 .5M3 9.500A9 9 0 0114 4M6 11.500A5 5 0 0114 8" /><circle cx="3" cy="12.500" r="1" fill="#ddd" /></svg></TB>
      <TB w="w-[22px]"><svg width="15" height="15" viewBox="0 0 15 15" fill="none" stroke="#fff"><path d="M.5 5h3L7.500 1.500v12L3.500 10h-3zM10 5q1.500 2.500 0 5M12 3q3 4.500 0 9" /></svg></TB>
      <TB w="w-[22px] ml-[1px]"><span className="text-[17px] font-['Liberation_Sans']">A</span></TB>
      <TB w="w-[24px] ml-[6px]"><svg width="16" height="18" viewBox="0 0 16 18"><rect width="16" height="18" rx="2" fill="#2d8cf0" /><path d="M8 3c3 0 4 2 4 5s1 4 1 5-2 0-2 0-1 2-3 2-3-2-3-2-2 1-2 0 1-2 1-5 1-5 4-5z" fill="#fff" /></svg></TB>
      <div className="w-[86px] flex flex-col items-center justify-center text-[12px] leading-[20px] font-['Liberation_Sans'] text-[#eee]"><div>17:52</div><div>2018/10/24</div></div>
      <div className="relative w-[26px] flex items-center justify-center">
        <svg width="16" height="15" viewBox="0 0 16 15"><path d="M0 0h16v12H5l-3 3v-3H0z" fill="#fff" /><path d="M3 3.500h10M3 6.500h10M3 9.500h7" stroke="#131519" /></svg>
        <div className="absolute left-[12px] top-[17px] w-[17px] h-[17px] rounded-full border border-[#aaa] bg-[#2a2a2a] text-[11px] leading-[15px] text-center font-['Liberation_Sans']">1</div>
      </div>
    </div>
  );
}

export default function App() {
  return (
    <div className="relative w-[1366px] h-[768px] overflow-hidden bg-[#e6e6e6] font-['Noto_Sans','Noto_Sans_CJK_SC',sans-serif]">
      {/* title bar */}
      <div className="h-[33px] bg-[#217346] flex items-center text-white text-[12px]">
        <div className="flex-1 flex items-center">
          <svg width="15" height="15" viewBox="0 0 15 15" fill="none" className="ml-[20px]"><path d="M.8.8h11l2.400 2.400v11H.8z" stroke="#fff" strokeWidth="1.500" /><path d="M4 1v4h6V1M3.500 14V9h8v5" stroke="#fff" strokeWidth="1.300" /></svg>
          <svg width="15" height="13" viewBox="0 0 15 13" fill="none" className="ml-[27px]"><path d="M4.500 1L1 4.500 4.500 8M1.500 4.500H9a4 4 0 010 8H6" stroke="#fff" strokeWidth="1.800" /></svg>
          <Caret c="#fff" className="ml-[6px]" />
          <svg width="14" height="12" viewBox="0 0 15 13" fill="none" className="ml-[15px]"><path d="M10.500 1L14 4.500 10.500 8M13.500 4.500H6a4 4 0 000 8h3" stroke="#4c8f6d" strokeWidth="1.800" /></svg>
          <Caret c="#4c8f6d" className="ml-[8px]" />
          <svg width="7" height="7" viewBox="0 0 7 7" className="ml-[21px]"><path d="M0 0h7v1H0zM0 3h7L3.500 7z" fill="#fff" /></svg>
        </div>
        <div className="text-[#eef5f0] whitespace-nowrap tracking-[0.35px] mr-[4px] -mt-[1px]">新建 Microsoft Excel 工作表 - Excel</div>
        <div className="flex-1 flex justify-end">
          <div className="w-[46px] flex justify-center"><svg width="14" height="11" viewBox="0 0 14 11" fill="none" stroke="#fff"><rect x=".5" y=".5" width="12" height="9.500" /><path d="M.5 2.500h12M6.500 9V4.500M4.500 6l2-2 2 2" /></svg></div>
          <div className="w-[46px] flex justify-center items-center"><div className="w-[9px] h-[2px] bg-white" /></div>
          <div className="w-[46px] flex justify-center"><svg width="11" height="11" viewBox="0 0 11 11" fill="none" stroke="#fff" strokeWidth="1.200"><rect x=".6" y="3" width="7.500" height="7.500" /><path d="M3 3V.6h7.500V8H8" /></svg></div>
          <div className="w-[46px] flex justify-center"><svg width="11" height="11" viewBox="0 0 11 11" stroke="#fff" strokeWidth="1.800"><path d="M1 1l9 9M10 1l-9 9" /></svg></div>
        </div>
      </div>
      {/* tabs */}
      <div className="h-[26px] bg-[#217346] flex items-stretch text-[12px] text-white">
        <div className="w-[58px] flex items-center justify-center">文件</div>
        <div className="w-[59px] flex items-center justify-center">开始</div>
        <div className="w-[50px] flex items-center justify-center bg-[#f1f1f1] text-[#217346]">插入</div>
        <div className="w-[78px] flex items-center justify-center">页面布局</div>
        <div className="w-[52px] flex items-center justify-center">公式</div>
        <div className="w-[54px] flex items-center justify-center">数据</div>
        <div className="w-[52px] flex items-center justify-center">审阅</div>
        <div className="w-[54px] flex items-center justify-center">视图</div>
        <div className="flex items-center ml-[15px] text-[#a9cdb9] gap-[5px]">
          <svg width="11" height="15" viewBox="0 0 11 15" fill="none" stroke="#a9cdb9"><path d="M3 10.500C2 8.500.5 8 .5 5.500a5 5 0 0110 0c0 2.500-1.500 3-2.500 5zM3.500 12.500h4M4.500 14.500h2" /></svg>
          <span>告诉我您想要做什么...</span>
        </div>
        <div className="flex-1" />
        <div className="flex items-center mr-[10px]">登录</div>
        <div className="w-[69px] bg-[#185c37] h-[25px] flex items-center pl-[7px] gap-[3px] text-[12px]">
          <svg width="16" height="16" viewBox="0 0 16 16" fill="none" stroke="#fff" strokeWidth="1.100"><circle cx="8" cy="5" r="4" /><path d="M1 16c0-4 2-6.500 5-7M12 11v5M9.500 13.500h5" /></svg>
          <span>共享</span>
        </div>
      </div>
      <Ribbon />
      <div className="h-[48px] bg-[#e6e6e6] border-t-2 border-[#c9c9c9] pt-[9px] pl-[5px] flex text-[14px]">
        <div className="w-[102px] h-[28px] bg-white border border-[#c6c6c6] flex items-center pl-[7px] text-[#555] justify-between pr-[5px]">
          <span>图表 1</span><Caret c="#666" />
        </div>
        <div className="w-[30px] h-[28px] flex justify-center items-center text-[#999]"><svg width="2" height="12" viewBox="0 0 2 12"><path d="M1 0v2M1 5v2M1 10v2" stroke="#999" strokeWidth="2" /></svg></div>
        <div className="w-[110px] h-[28px] bg-white border border-[#c6c6c6] flex items-center text-[#999]">
          <svg width="11" height="11" viewBox="0 0 11 11" stroke="#bbb" strokeWidth="1.600" className="ml-[13px]"><path d="M.5.500l10 10M10.500.500l-10 10" /></svg>
          <svg width="14" height="11" viewBox="0 0 14 11" fill="none" stroke="#bbb" strokeWidth="2" className="ml-[24px]"><path d="M1 6l4 4 8-9" /></svg>
          <span className="ml-[21px] font-['Liberation_Serif'] italic font-bold text-[#555] text-[13px]">fx</span>
        </div>
        <div className="ml-[3px] w-[1111px] h-[28px] bg-white border border-[#c6c6c6] flex items-center justify-end pr-[5px]">
          <svg width="9" height="6" viewBox="0 0 9 6" fill="none" stroke="#666" strokeWidth="1.600"><path d="M1 1l3.500 3.500L8 1" /></svg>
        </div>
      </div>
      <Sheet />
      {/* sheet tabs */}
      <div className="h-[27px] bg-[#e6e6e6] border-b-2 border-[#c9c9c9] flex items-start text-[13px]">
        <div className="w-[100px] h-[24px] flex items-center text-[#bbb]">
          <svg width="5" height="8" viewBox="0 0 5 8" className="ml-[26px]"><path d="M5 0v8L0 4z" fill="#c4c4c4" /></svg>
          <svg width="5" height="8" viewBox="0 0 5 8" className="ml-[24px]"><path d="M0 0v8l5-4z" fill="#c4c4c4" /></svg>
        </div>
        <div className="w-[69px] h-[24px] bg-white border-x border-[#c9c9c9] border-b-2 border-b-[#217346] text-[#217346] text-center leading-[24px] font-['Liberation_Sans']">Sheet1</div>
        <div className="ml-[33px] mt-[4px] w-[16px] h-[16px] rounded-full border border-[#7f7f7f] flex items-center justify-center">
          <svg width="8" height="8" viewBox="0 0 8 8" stroke="#777" strokeWidth="1.400"><path d="M4 0v8M0 4h8" /></svg>
        </div>
        <div className="ml-[601px] mt-[8px]"><svg width="2" height="11" viewBox="0 0 2 11"><path d="M1 0v2M1 4.500v2M1 9v2" stroke="#aaa" strokeWidth="2" /></svg></div>
        <div className="ml-[15px] mt-[6px] w-[509px] h-[15px] flex">
          <div className="w-[15px] h-[15px] bg-white border border-[#ababab] flex items-center justify-center"><svg width="4" height="7" viewBox="0 0 4 7"><path d="M4 0v7L0 3.500z" fill="#555" /></svg></div>
          <div className="w-[451px] h-[15px] bg-white border border-[#ababab]" />
          <div className="flex-1" />
          <div className="w-[15px] h-[15px] bg-white border border-[#ababab] flex items-center justify-center"><svg width="4" height="7" viewBox="0 0 4 7"><path d="M0 0v7l4-3.500z" fill="#555" /></svg></div>
        </div>
      </div>
      {/* status bar */}
      <div className="h-[22px] bg-[#f1f1f1] flex items-center text-[12px] text-[#555]">
        <div className="pl-[7px] w-[822px]">就绪</div>
        <div className="w-[87px] whitespace-nowrap">平均值: 1075</div>
        <div className="w-[68px] whitespace-nowrap">计数: 204</div>
        <div className="w-[92px] whitespace-nowrap">求和: 217150</div>
        <div className="w-[37px] h-[22px] bg-[#c6c6c6] flex items-center justify-center">
          <svg width="13" height="13" viewBox="0 0 13 13" fill="none" stroke="#666"><path d="M.5.500h12v12H.5zM4.500.500v12M8.500.500v12M.5 4.500h12M.5 8.500h12" /></svg>
        </div>
        <div className="w-[39px] flex justify-center"><svg width="13" height="13" viewBox="0 0 13 13" fill="none" stroke="#666"><path d="M.5.500h12v12H.5zM3.500 3.500h6v6h-6zM3.500 5.500h6M3.500 7.500h6" /></svg></div>
        <div className="w-[37px] flex justify-center"><svg width="13" height="13" viewBox="0 0 13 13" fill="none" stroke="#666"><path d="M.5.500h12v12H.5zM6.500.500v6h-6" /></svg></div>
        <div className="ml-[5px] w-[7px] h-[2px] bg-[#666]" />
        <div className="relative ml-[4px] w-[100px] h-px bg-[#999]">
          <div className="absolute left-[49px] top-[-7px] w-[3px] h-[14px] bg-[#666]" />
        </div>
        <svg width="8" height="8" viewBox="0 0 8 8" stroke="#666" strokeWidth="1.600" className="ml-[4px]"><path d="M4 0v8M0 4h8" /></svg>
        <div className="ml-[13px]">100%</div>
      </div>
      <Taskbar />
      <Chart />
      <Menu />
    </div>
  );
}
